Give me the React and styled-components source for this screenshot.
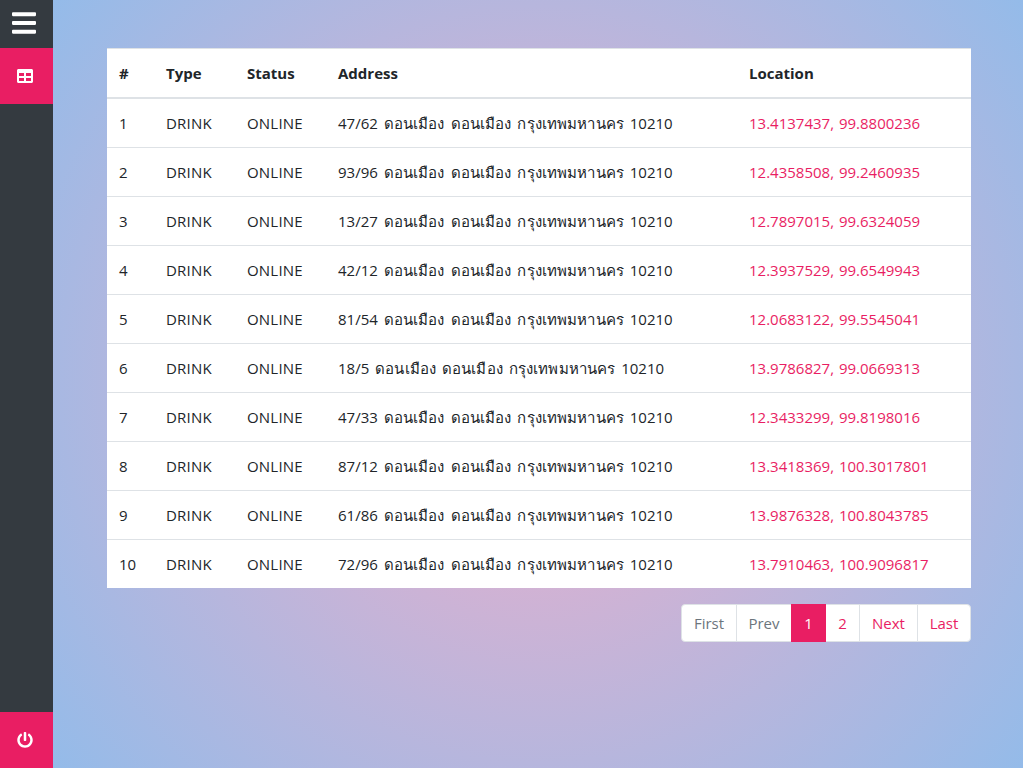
import React from "react";
import styled, { createGlobalStyle } from "styled-components";
import { FaBars, FaTable, FaPowerOff } from "react-icons/fa";

const GlobalStyle = createGlobalStyle`
  *, *::before, *::after { box-sizing: border-box; }
  body {
    margin: 0;
    color: #212529;
    font-family: "Open Sans", "Noto Sans", sans-serif;
    font-size: 15px;
    font-weight: 400;
    line-height: 24px;
    overflow: hidden;
  }
`;

const Layout = styled.div`
  display: flex;
  height: 100vh;
`;

const Sidebar = styled.nav`
  display: flex;
  flex-direction: column;
  justify-content: space-between;
  width: 53px;
  flex: none;
  background: #343a40;
`;

const MenuToggle = styled.button`
  display: flex;
  width: 100%;
  height: 48px;
  padding: 8.5px 0 0 12px;
  border: 0;
  background: none;
  color: #fff;
  svg { width: 24px; height: 28px; }
`;

const NavItem = styled.a`
  display: flex;
  align-items: center;
  height: 56px;
  padding-left: 17px;
  background: #e91e63;
  color: #fff;
  font-size: 16px;
`;

const Content = styled.main`
  flex: 1;
  padding: 48px 52px 0 54px;
  background: radial-gradient(circle, #eeaeca 0%, #94bbe9 100%);
`;

const Table = styled.table`
  width: 100%;
  table-layout: fixed;
  border-collapse: separate;
  border-spacing: 0;
  background: #fff;
  margin-bottom: 16px;
`;

const HeadCell = styled.th`
  width: ${(p) => p.$width}px;
  height: 51px;
  padding: 0 12px;
  border-top: 1px solid #dee2e6;
  border-bottom: 2px solid #dee2e6;
  text-align: left;
  font-weight: 700;
`;

const Cell = styled.td`
  height: 49px;
  padding: 0 12px;
  border-top: 1px solid #dee2e6;
  white-space: nowrap;
  letter-spacing: ${(p) => p.$spacing || 0}px;
  tr:first-child > & {
    height: 48px;
    border-top: 0;
  }
`;

const Address = styled.span`
  word-spacing: 2px;
`;

const District = styled.span`
  letter-spacing: 0.12px;
`;

const MapLink = styled.a`
  color: #e91e63;
  word-spacing: 1px;
`;

const Pagination = styled.ul`
  display: flex;
  justify-content: flex-end;
  margin: 0;
  padding: 0;
  list-style: none;
`;

const PageItem = styled.li`
  display: flex;
  align-items: center;
  justify-content: center;
  position: relative;
  z-index: ${(p) => (p.$active ? 1 : 0)};
  width: ${(p) => p.$width}px;
  height: 38px;
  margin-left: -1px;
  border: 1px solid ${(p) => (p.$active ? "#e91e63" : "#dee2e6")};
  background: ${(p) => (p.$active ? "#e91e63" : "#fff")};
  color: ${(p) => (p.$active ? "#fff" : p.$disabled ? "#6c757d" : "#e91e63")};
  &:first-child { border-radius: 4px 0 0 4px; }
  &:last-child { border-radius: 0 4px 4px 0; }
`;

const columns = [
  { label: "#", width: 47 },
  { label: "Type", width: 81 },
  { label: "Status", width: 91 },
  { label: "Address", width: 411 },
  { label: "Location", width: 234 },
];

const machines = [
  ["47/62", "13.4137437, 99.8800236"],
  ["93/96", "12.4358508, 99.2460935"],
  ["13/27", "12.7897015, 99.6324059"],
  ["42/12", "12.3937529, 99.6549943"],
  ["81/54", "12.0683122, 99.5545041"],
  ["18/5", "13.9786827, 99.0669313"],
  ["47/33", "12.3433299, 99.8198016"],
  ["87/12", "13.3418369, 100.3017801"],
  ["61/86", "13.9876328, 100.8043785"],
  ["72/96", "13.7910463, 100.9096817"],
];

const pages = [
  { label: "First", width: 56, disabled: true },
  { label: "Prev", width: 56, disabled: true },
  { label: "1", width: 35, active: true },
  { label: "2", width: 35 },
  { label: "Next", width: 59 },
  { label: "Last", width: 54 },
];

export default function App() {
  return (
    <Layout>
      <GlobalStyle />
      <Sidebar>
        <div>
          <MenuToggle aria-label="Menu"><FaBars preserveAspectRatio="none" /></MenuToggle>
          <NavItem><FaTable /></NavItem>
        </div>
        <NavItem><FaPowerOff /></NavItem>
      </Sidebar>
      <Content>
        <Table>
          <thead>
            <tr>
              {columns.map((c) => (
                <HeadCell key={c.label} $width={c.width}>{c.label}</HeadCell>
              ))}
            </tr>
          </thead>
          <tbody>
            {machines.map(([house, location], i) => (
              <tr key={location}>
                <Cell>{i + 1}</Cell>
                <Cell $spacing={0.2}>DRINK</Cell>
                <Cell $spacing={0.2}>ONLINE</Cell>
                <Cell>
                  <Address>
                    {house} <District>ดอนเมือง ดอนเมือง กรุงเทพมหานคร</District> 10210
                  </Address>
                </Cell>
                <Cell><MapLink>{location}</MapLink></Cell>
              </tr>
            ))}
          </tbody>
        </Table>
        <Pagination>
          {pages.map((p) => (
            <PageItem key={p.label} $width={p.width} $active={p.active} $disabled={p.disabled}>
              {p.label}
            </PageItem>
          ))}
        </Pagination>
      </Content>
    </Layout>
  );
}
